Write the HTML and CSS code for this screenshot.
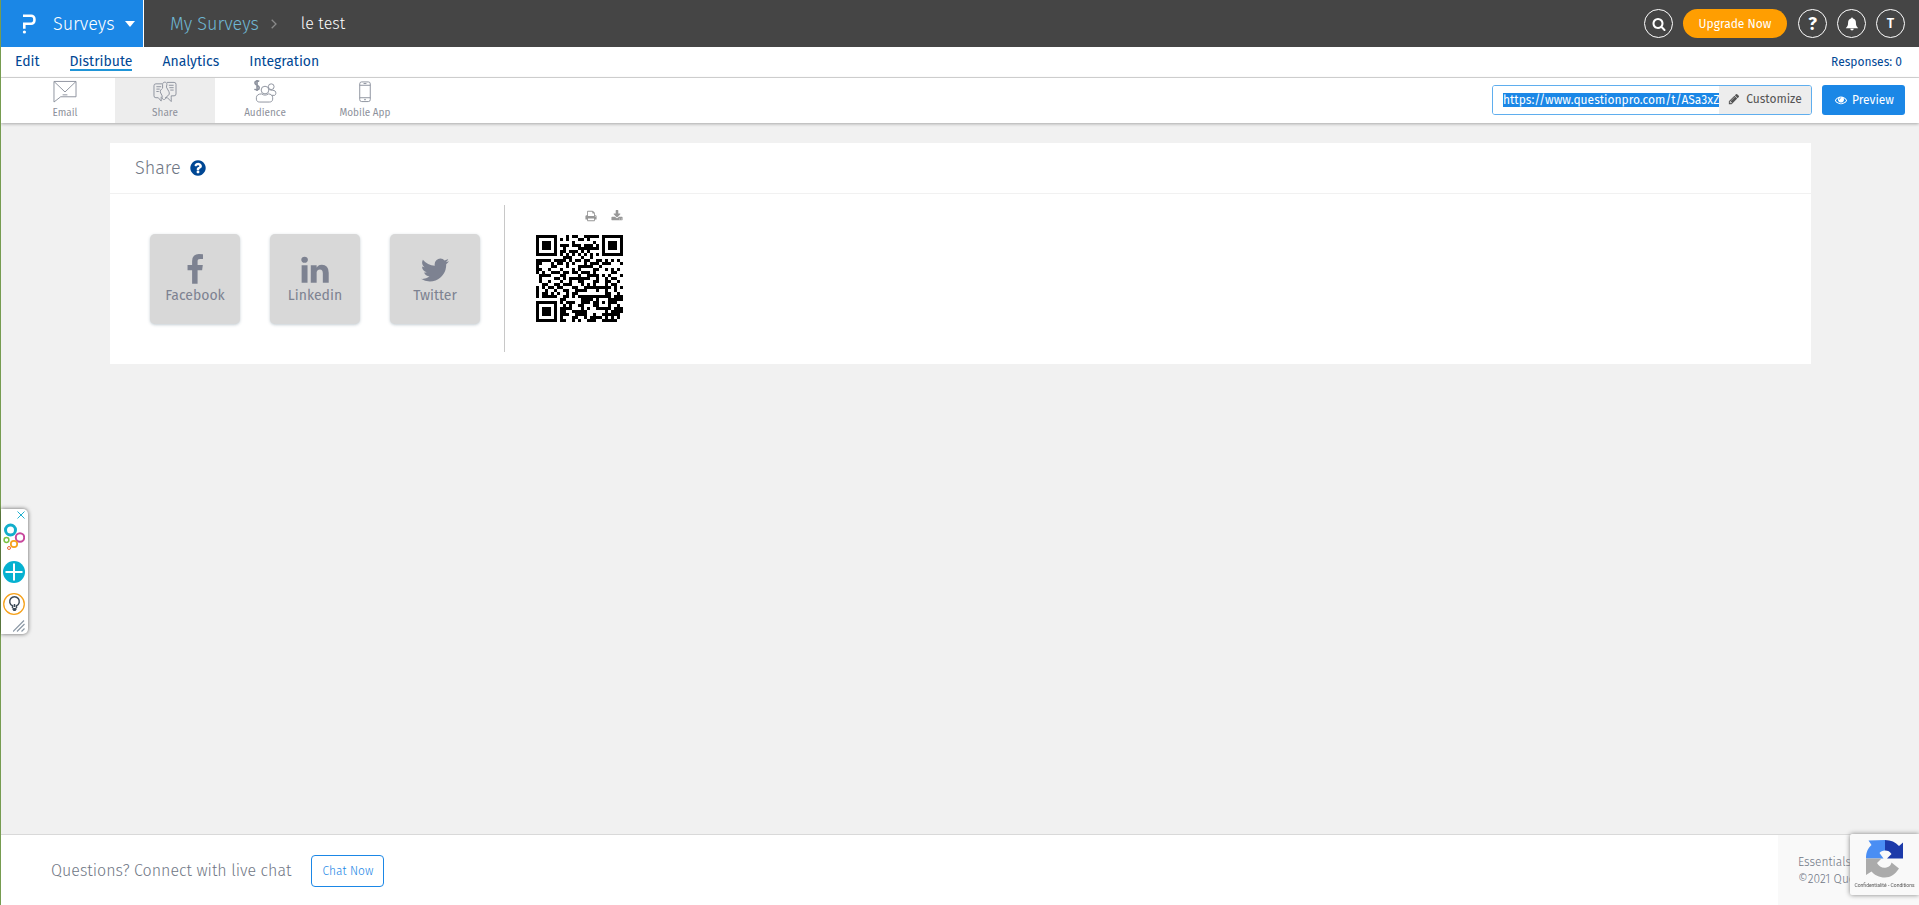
FILE: index.html
```html
<!DOCTYPE html>
<html lang="en">
<head>
  <meta charset="UTF-8">
  <meta name="viewport" content="width=device-width, initial-scale=1">
  <title>Share - le test</title>
  <link rel="stylesheet" href="styles.css">
</head>
<body>
  <!-- Top bar -->
  <header class="topbar">
    <button class="brand" type="button">
      <svg class="brand-logo" viewBox="0 0 14 20" fill="none" stroke="#fff" stroke-width="2.6"><path d="M1 1.7h8.2a3.2 3.2 0 0 1 3.2 3.2v1.6a3.2 3.2 0 0 1-3.2 3.2H2.3v5"/><circle cx="2.4" cy="18" r="1.6" fill="#fff" stroke="none"/></svg>
      <span>Surveys</span>
      <svg class="caret" viewBox="0 0 10 6"><path d="M0 0h10L5 6z" fill="#fff"/></svg>
    </button>
    <nav class="crumbs">
      <a href="#">My Surveys</a>
      <svg class="chevron" viewBox="0 0 6 10" fill="none" stroke="#8a8a8a" stroke-width="1.3"><path d="M.7.7L5 5 .7 9.3"/></svg>
      <span>le test</span>
    </nav>
    <div class="top-actions">
      <button class="round" type="button" aria-label="Search"><svg class="icon" viewBox="0 0 1792 1792"><path d="M1216 832q0-185-131.5-316.5t-316.5-131.5-316.5 131.5-131.5 316.5 131.5 316.5 316.5 131.5 316.5-131.5 131.5-316.5zm512 832q0 52-38 90t-90 38q-54 0-90-38l-343-342q-179 124-399 124-143 0-273.5-55.5t-225-150-150-225-55.5-273.5 55.5-273.5 150-225 225-150 273.5-55.5 273.5 55.5 225 150 150 225 55.5 273.5q0 220-124 399l343 343q37 37 37 90z"/></svg></button>
      <button class="upgrade" type="button">Upgrade Now</button>
      <button class="round help" type="button">?</button>
      <button class="round" type="button" aria-label="Notifications"><svg class="icon" viewBox="0 0 14 14"><path d="M7 .6c.6 0 .9.4.9.9 2 .4 3 2 3 4 0 2.900.8 4.300 2.300 5.700H.8C2.300 9.800 3.100 8.400 3.100 5.500c0-2 1-3.600 3-4 0-.5.3-.9.9-.9zM5.300 11.800h3.400a1.700 1.700 0 0 1-3.400 0z"/></svg></button>
      <button class="round user" type="button">T</button>
    </div>
  </header>

  <!-- Main tabs -->
  <nav class="tabs">
    <a href="#">Edit</a>
    <a href="#" class="active">Distribute</a>
    <a href="#">Analytics</a>
    <a href="#">Integration</a>
    <a href="#" class="responses">Responses: 0</a>
  </nav>

  <!-- Distribute tools -->
  <div class="toolbar">
    <nav class="tools">
      <a href="#">
        <svg viewBox="0 0 24 24"><path d="M.5 1.500h23v16H7.500L.5 23zM.5 1.500L12 12.500l11.500-11M9.500 15.500h5"/></svg>
        Email
      </a>
      <a href="#" class="active">
        <svg viewBox="0 0 24 24"><path d="M8 17.500V22l-3-3.500H2.500a2 2 0 0 1-2-2V6a2 2 0 0 1 2-2H9M18.500 18.500v4l-4-4H12M14 2.500h7.500a2 2 0 0 1 2 2v10a2 2 0 0 1-2 2h-3v2M9.500 4.500c0-3 4.500-3 4.500 0l-.5 3 2.500 4.500c1 2 .5 4-1.500 4.500l-2 3c-1 1.500-3.500 1-3.500-1v-2l-2-4c-.5-1.500 1.500-3 2.500-4zM3 7h5M3 9.500h3.500M3 12h2.500M16 5.500h5M16.500 8h4.500M17.500 10.500H21"/></svg>
        Share
      </a>
      <a href="#">
        <svg viewBox="0 0 24 24"><path d="M6 1.500C4.500.5 1.500.8 1.500 3.200S6 5.300 6 8 2.500 10.500 1 9.500M3.700 0v11.500" stroke-width="1.700"/><circle cx="12" cy="10.500" r="4"/><circle cx="18.500" cy="7" r="3"/><path d="M8.500 14.500C5 14.500 3 16 3 18.500v1.500c0 2 1.500 3 3.500 3h10c2 0 3.500-1 3.500-3v-1.500c0-2.500-2-4-4.500-4-2 1.700-5 1.700-7 0zM16.500 10c2 1 5 .5 6 1.500 1.300 1.300 1 4-.5 4.500h-3"/></svg>
        Audience
      </a>
      <a href="#">
        <svg viewBox="0 0 24 24"><rect x="6.500" y="2" width="11" height="20.500" rx="2"/><path d="M6.500 5.500h11M6.500 18.500h11M10.500 3.700h3"/><circle cx="12" cy="20.500" r=".5"/></svg>
        Mobile App
      </a>
    </nav>
    <div class="link-box">
      <input type="text" id="survey-url" aria-label="Survey link" value="https://www.questionpro.com/t/ASa3xZlre7" readonly>
      <button type="button"><svg class="icon" viewBox="0 0 1792 1792"><path d="M491 1536l91-91-235-235-91 91v107h128v128h107zm523-928q0-22-22-22-10 0-17 7l-542 542q-7 7-7 17 0 22 22 22 10 0 17-7l542-542q7-7 7-17zm-54-192l416 416-832 832h-416v-416zm683 96q0 53-37 90l-166 166-416-416 166-165q36-38 90-38 53 0 91 38l235 234q37 39 37 91z"/></svg>Customize</button>
    </div>
    <button class="preview" type="button"><svg class="icon" viewBox="0 0 1792 1792"><path d="M1664 960q-152-236-381-353 61 104 61 225 0 185-131.500 316.500t-316.500 131.500-316.500-131.500-131.500-316.500q0-121 61-225-229 117-381 353 133 205 333.500 326.500t434.500 121.500 434.500-121.500 333.500-326.500zm-720-384q0-20-14-34t-34-14q-125 0-214.500 89.500t-89.500 214.500q0 20 14 34t34 14 34-14 14-34q0-86 61-147t147-61q20 0 34-14t14-34zm848 384q0 34-20 69-140 230-376.500 368.500t-499.500 138.500-499.500-139-376.500-368q-20-35-20-69t20-69q140-229 376.500-368t499.500-139 499.500 139 376.500 368q20 35 20 69z"/></svg>Preview</button>
  </div>

  <main class="content">
    <section class="card">
      <div class="card-head">
        <h1>Share</h1>
        <a href="#" aria-label="Help"><svg viewBox="0 0 1792 1792"><path d="M1024 1376v-192q0-14-9-23t-23-9h-192q-14 0-23 9t-9 23v192q0 14 9 23t23 9h192q14 0 23-9t9-23zm256-672q0-88-55.500-163t-138.500-116-170-41q-243 0-371 213-15 24 8 42l132 100q7 6 19 6 16 0 25-12 53-68 86-92 34-24 86-24 48 0 85.500 26t37.500 59q0 38-20 61t-68 45q-63 28-115.500 86.500t-52.500 125.500v36q0 14 9 23t23 9h192q14 0 23-9t9-23q0-19 21.500-49.500t54.500-49.500q32-18 49-28.500t46-35 44.500-48 28-60.500 12.500-81zm384 192q0 209-103 385.500t-279.500 279.500-385.500 103-385.500-103-279.500-279.500-103-385.500 103-385.500 279.500-279.500 385.500-103 385.500 103 279.500 279.500 103 385.500z"/></svg></a>
      </div>
      <div class="card-body">
        <div class="socials">
          <button type="button"><svg viewBox="0 0 1792 1792"><path d="M1343 12v264h-157q-86 0-116 36t-30 108v189h293l-39 296h-254v759h-306v-759h-255v-296h255v-218q0-186 104-288.500t277-102.500q147 0 228 12z"/></svg>Facebook</button>
          <button type="button"><svg viewBox="0 0 1792 1792"><path d="M477 625v991h-330v-991h330zm21-306q1 73-50.500 122t-135.500 49h-2q-82 0-132-49t-50-122q0-74 51.500-122.500t134.500-48.500 133 48.500 51 122.500zm1166 729v568h-329v-530q0-105-40.500-164.500t-126.500-59.500q-63 0-105.500 34.500t-63.500 85.500q-11 30-11 81v553h-329q2-399 2-647t-1-296l-1-48h329v144h-2q20-32 41-56t56.500-52 87-43.500 114.500-15.500q171 0 275 113.500t104 332.500z"/></svg>Linkedin</button>
          <button type="button"><svg viewBox="0 0 1792 1792"><path d="M1684 408q-67 98-162 167 1 14 1 42 0 130-38 259.500t-115.500 248.500-184.500 210.500-258 146-323 54.500q-271 0-496-145 35 4 78 4 225 0 401-138-105-2-188-64.500t-114-159.500q33 5 61 5 43 0 85-11-112-23-185.500-111.500t-73.500-205.500v-4q68 38 146 41-66-44-105-115t-39-154q0-88 44-163 121 149 294.500 238.500t371.500 99.500q-8-38-8-74 0-134 94.500-228.500t228.500-94.500q140 0 236 102 109-21 205-78-37 115-142 178 93-10 186-50z"/></svg>Twitter</button>
        </div>
        <div class="qr">
          <div class="qr-actions">
            <button type="button" aria-label="Print"><svg class="icon" viewBox="0 0 1792 1792"><path d="M448 1536h896v-256h-896v256zm0-640h896v-384h-160q-40 0-68-28t-28-68v-160h-640v640zm1152 64q0-26-19-45t-45-19-45 19-19 45 19 45 45 19 45-19 19-45zm128 0v416q0 13-9.500 22.500t-22.500 9.500h-224v160q0 40-28 68t-68 28h-960q-40 0-68-28t-28-68v-160h-224q-13 0-22.500-9.500t-9.500-22.500v-416q0-79 56.500-135.500t135.500-56.500h64v-544q0-40 28-68t68-28h672q40 0 88 20t76 48l152 152q28 28 48 76t20 88v256h64q79 0 135.500 56.500t56.500 135.500z"/></svg></button>
            <button type="button" aria-label="Download"><svg class="icon" viewBox="0 0 1792 1792"><path d="M1344 1344q0-26-19-45t-45-19-45 19-19 45 19 45 45 19 45-19 19-45zm256 0q0-26-19-45t-45-19-45 19-19 45 19 45 45 19 45-19 19-45zm128-224v320q0 40-28 68t-68 28h-1472q-40 0-68-28t-28-68v-320q0-40 28-68t68-28h465l135 136q58 56 136 56t136-56l136-136h464q40 0 68 28t28 68zm-325-569q17 41-14 70l-448 448q-18 19-45 19t-45-19l-448-448q-31-29-14-70 17-39 59-39h256v-448q0-26 19-45t45-19h256q26 0 45 19t19 45v448h256q42 0 59 39z"/></svg></button>
          </div>
          <svg class="qr-code" viewBox="0 0 29 29" role="img" aria-label="QR code" shape-rendering="crispEdges"><path id="qr-path" d=""/></svg>
        </div>
      </div>
    </section>
  </main>

  <footer class="footer">
    <p>Questions? Connect with live chat</p>
    <button class="chat" type="button">Chat Now</button>
    <div class="legal">
      <span>Essentials</span>
      <span>©2021 QuestionPro</span>
    </div>
  </footer>

  <!-- Floating side widget -->
  <aside class="widget">
    <button type="button" aria-label="Close"><svg width="8" height="8" viewBox="0 0 8 8" stroke="#1fb0cf" stroke-width="1"><path d="M.5.5l7 7M7.500.5l-7 7"/></svg></button>
    <svg width="22" height="28" viewBox="0 0 22 28" fill="none"><circle cx="7.500" cy="7" r="5" stroke="#12aecb" stroke-width="3"/><circle cx="17" cy="14.500" r="4.200" stroke="#c8479c" stroke-width="2"/><circle cx="3.500" cy="17" r="2.400" stroke="#7cc242" stroke-width="1.500"/><circle cx="11" cy="21" r="3.200" stroke="#f6a21b" stroke-width="1.700"/><circle cx="6" cy="25" r="1.500" stroke="#ee6a3c" stroke-width="1"/></svg>
    <button type="button" aria-label="Add"><svg width="22" height="22" viewBox="0 0 22 22"><circle cx="11" cy="11" r="11" fill="#05b1d0"/><path d="M11 2.500v17M2.500 11h17" stroke="#fff" stroke-width="2"/></svg></button>
    <button type="button" aria-label="Ideas"><svg width="22" height="22" viewBox="0 0 22 22" fill="none"><circle cx="11" cy="11" r="10.300" stroke="#f6a21b" stroke-width="1.300"/><path d="M9.500 15v-2.200a4.800 4.800 0 1 1 4 0V15M11.500 11v3" stroke="#3e4c59" stroke-width="1.500"/><path d="M9.500 15h4v1.500l-1 1.500h-2l-1-1.500z" fill="#3e4c59"/></svg></button>
    <svg class="grip" width="12" height="12" viewBox="0 0 12 12" stroke="#8b98a5" stroke-width="1.200"><path d="M0 11.500L11 .5M4 11.500L11.500 4M8.500 11.500l3-3"/></svg>
  </aside>

  <!-- reCAPTCHA badge -->
  <div class="captcha">
    <svg viewBox="0 0 38 38"><path d="M19 0v10.500c-2.500 0-4.500 1-5.500 2.500l4 5.500H0C0 12 2 8 5.500 5L2.500.5z" fill="#4a8ef4"/><path d="M19 0c6 0 10.500 2 14 6l4-3.500v16H21l4.500-4.500C24 11.500 22 10.500 19 10.500z" fill="#1c3aa9"/><path d="M0 18.500h15.500L11 23c2 4 6 5.500 9.500 4.500 3-.5 4.500-2.500 5-5l7.500 6c-4 6-8.500 9-14 9-6 0-10.500-2.500-13.500-6L0 35z" fill="#ababab"/></svg>
    <span><a href="#">Confidentialité</a> - <a href="#">Conditions</a></span>
  </div>

  <script src="script.js"></script>
</body>
</html>
```

FILE: styles.css
```css
* {
  box-sizing: border-box;
}
body {
  margin: 0;
  min-height: 100vh;
  display: flex;
  flex-direction: column;
  border-left: 1px solid #769c50;
  background: #f1f1f1;
  color: #707785;
  font-family: "Fira Sans", Roboto, "Liberation Sans", sans-serif;
  font-size: 14px;
}
a {
  color: inherit;
  text-decoration: none;
}
button {
  margin: 0;
  padding: 0;
  border: 0;
  background: none;
  color: inherit;
  font: inherit;
  cursor: pointer;
}
svg {
  display: block;
}
.icon {
  width: 14px;
  height: 14px;
  fill: currentColor;
}

/* top bar */
.topbar {
  display: flex;
  height: 47px;
  background: #454545;
  color: #fff;
  font-size: 18px;
  font-weight: 300;
}
.brand {
  display: flex;
  align-items: center;
  width: 143px;
  padding-left: 21px;
  border-right: 1px solid #fff;
  background: #1b87e6;
}
.brand-logo {
  width: 14px;
  height: 20px;
  margin-right: 17px;
}
.caret {
  width: 10px;
  height: 6px;
  margin-left: 10px;
}
.crumbs {
  display: flex;
  align-items: center;
  padding-left: 26px;
}
.crumbs a {
  color: #6fb6d2;
}
.crumbs span {
  font-size: 16px;
}
.chevron {
  width: 6px;
  height: 10px;
  margin: 0 24px 0 12px;
}
.top-actions {
  display: flex;
  align-items: center;
  gap: 10px;
  margin-left: auto;
  padding-right: 14px;
}
.round {
  display: flex;
  align-items: center;
  justify-content: center;
  width: 29px;
  height: 29px;
  border: 1px solid #fff;
  border-radius: 50%;
}
.help {
  font-size: 18px;
  font-weight: 700;
}
.user {
  font-size: 14px;
  font-weight: 500;
}
.upgrade {
  width: 104px;
  height: 29px;
  margin-right: 1px;
  border-radius: 15px;
  background: #ff9e01;
  font-size: 12px;
  font-weight: 400;
}

/* tabs */
.tabs {
  display: flex;
  align-items: center;
  gap: 30px;
  height: 31px;
  padding: 0 17px 0 14px;
  border-bottom: 1px solid #d9d9d9;
  background: #fff;
  color: #004794;
  line-height: 18px;
}
.tabs .active {
  box-shadow: inset 0 -2px 0 #1f95d8;
}
.tabs .responses {
  margin-left: auto;
  font-size: 12px;
}

/* toolbar */
.toolbar {
  display: flex;
  align-items: flex-start;
  height: 45px;
  padding: 0 14px;
  background: #fff;
  box-shadow: 0 1px 3px rgba(0, 0, 0, 0.3);
}
.tools {
  display: flex;
  margin-right: auto;
}
.tools a {
  display: flex;
  flex-direction: column;
  align-items: center;
  width: 100px;
  height: 45px;
  padding-top: 2px;
  color: #8d919b;
  font-size: 10px;
  line-height: 20px;
}
.tools .active {
  background: #ededed;
}
.tools svg {
  width: 24px;
  height: 24px;
  fill: none;
  stroke: #8d929e;
  stroke-width: 1;
}
.link-box {
  display: flex;
  width: 320px;
  height: 30px;
  margin: 7px 10px 0 0;
  border: 1px solid #5faeee;
  border-radius: 3px;
  overflow: hidden;
}
.link-box input {
  flex: 1;
  min-width: 0;
  padding: 0 0 0 10px;
  border: 0;
  outline: 0;
  color: #545e6b;
  font: inherit;
  font-size: 12px;
}
.link-box input::selection {
  background: #1b87e6;
  color: #fff;
}
.link-box button {
  display: flex;
  align-items: center;
  justify-content: center;
  gap: 6px;
  width: 92px;
  padding-bottom: 2px;
  background: #ededed;
  color: #545454;
  font-size: 12px;
}
.link-box .icon,
.preview .icon {
  width: 12px;
  height: 12px;
}
.preview {
  display: flex;
  align-items: center;
  justify-content: center;
  gap: 5px;
  width: 83px;
  height: 30px;
  margin-top: 7px;
  padding-left: 2px;
  border-radius: 3px;
  background: #1b87e6;
  color: #fff;
  font-size: 12px;
}

/* share card */
.content {
  flex: 1;
  padding: 20px 108px 20px 109px;
}
.card {
  background: #fff;
}
.card-head {
  display: flex;
  align-items: center;
  gap: 8px;
  height: 51px;
  padding: 0 0 1px 25px;
  border-bottom: 1px solid #f1f1f1;
}
.card-head h1 {
  margin: 0;
  font-size: 18px;
  font-weight: 300;
}
.card-head svg {
  width: 18px;
  height: 18px;
  fill: #004794;
}
.card-body {
  display: flex;
  padding: 11px 0 12px 40px;
}
.socials {
  display: flex;
  gap: 30px;
  padding: 29px 24px 28px 0;
  border-right: 1px solid #c8c8c8;
}
.socials button {
  display: flex;
  flex-direction: column;
  align-items: center;
  width: 90px;
  height: 90px;
  padding-top: 20px;
  border-radius: 5px;
  background: #d8d8d8;
  box-shadow: 0 1px 3px rgba(60, 90, 110, 0.3);
  color: #7d8291;
  line-height: 20px;
}
.socials svg {
  width: 32px;
  height: 32px;
  fill: #7d8291;
}
.qr {
  padding: 5px 0 0 31px;
}
.qr-actions {
  display: flex;
  justify-content: flex-end;
  gap: 14px;
  margin-bottom: 13px;
  color: #979797;
}
.qr-actions .icon {
  width: 12px;
  height: 12px;
}
.qr-code {
  width: 87px;
  height: 87px;
}

/* footer */
.footer {
  display: flex;
  align-items: center;
  height: 71px;
  padding-left: 50px;
  border-top: 1px solid #d9d9d9;
  background: #fff;
}
.footer p {
  margin: 0 20px 0 0;
  font-size: 16px;
  font-weight: 300;
}
.chat {
  width: 73px;
  height: 32px;
  margin-top: 2px;
  border: 1px solid #1b87e6;
  border-radius: 4px;
  color: #1b87e6;
  font-size: 12px;
  font-weight: 300;
}
.legal {
  align-self: stretch;
  width: 141px;
  margin-left: auto;
  padding: 19px 69px 0 20px;
  background: #f9f9f9;
  font-size: 12px;
  line-height: 17px;
  font-weight: 300;
}
.legal span {
  display: block;
  overflow: hidden;
  white-space: nowrap;
}

/* floating parts */
.widget {
  position: fixed;
  left: 1px;
  top: 509px;
  display: flex;
  flex-direction: column;
  align-items: center;
  gap: 10px;
  width: 27px;
  padding: 2px 3px 2px 2px;
  border-radius: 0 5px 5px 0;
  background: #fff;
  box-shadow: 0 0 4px rgba(0, 0, 0, 0.6);
}
.widget button:first-child {
  align-self: flex-end;
  margin-bottom: -6px;
}
.widget .grip {
  align-self: flex-end;
  margin-top: -5px;
}
.captcha {
  position: fixed;
  right: 0;
  bottom: 10px;
  display: flex;
  flex-direction: column;
  align-items: center;
  gap: 3px;
  width: 69px;
  height: 61px;
  padding-top: 6px;
  border-radius: 2px 0 0 2px;
  background: #f9f9f9;
  box-shadow: 0 0 5px gray;
  color: #555;
  font-family: Roboto, "Liberation Sans", sans-serif;
  font-size: 5px;
  line-height: 8px;
  white-space: nowrap;
}
.captcha svg {
  width: 38px;
  height: 38px;
}
```

FILE: script.js
```js
// QR code, version 3 (29x29), level L, byte mode
var SIZE = 29, DATA = 55, ECC = 15;

function gfMul(a, b) {
  var r = 0;
  for (; b; b >>= 1) {
    if (b & 1) r ^= a;
    a <<= 1;
    if (a & 256) a ^= 0x11d;
  }
  return r;
}

function codewords(text) {
  var bits = '0100' + text.length.toString(2).padStart(8, '0');
  for (var i = 0; i < text.length; i++) bits += text.charCodeAt(i).toString(2).padStart(8, '0');
  bits += '0000';
  var out = bits.match(/.{8}/g).map(function(b) { return parseInt(b, 2); });
  for (var pad = 236; out.length < DATA; pad ^= 236 ^ 17) out.push(pad);

  // generator polynomial, then the remainder
  var gen = [1], root = 1;
  for (i = 0; i < ECC; i++) {
    var next = gen.concat(0);
    gen.forEach(function(g, k) { next[k + 1] ^= gfMul(g, root); });
    gen = next;
    root = gfMul(root, 2);
  }
  var rem = out.concat(new Array(ECC).fill(0));
  for (i = 0; i < DATA; i++) {
    var f = rem[i];
    gen.forEach(function(g, k) { rem[i + k] ^= gfMul(g, f); });
  }
  return out.concat(rem.slice(DATA));
}

var masks = [
  function(r, c) { return (r + c) % 2; },
  function(r) { return r % 2; },
  function(r, c) { return c % 3; },
  function(r, c) { return (r + c) % 3; },
  function(r, c) { return (Math.floor(r / 2) + Math.floor(c / 3)) % 2; },
  function(r, c) { return r * c % 2 + r * c % 3; },
  function(r, c) { return (r * c % 2 + r * c % 3) % 2; },
  function(r, c) { return ((r + c) % 2 + r * c % 3) % 2; }
];

function build(words, mask) {
  var m = [], r, c, i;
  for (r = 0; r < SIZE; r++) m.push(new Array(SIZE).fill(null));

  [[3, 3], [3, 25], [25, 3]].forEach(function(p) {
    for (var y = -4; y <= 4; y++) for (var x = -4; x <= 4; x++) {
      if (!m[p[0] + y] || m[p[0] + y][p[1] + x] === undefined) continue;
      var d = Math.max(Math.abs(x), Math.abs(y));
      m[p[0] + y][p[1] + x] = d !== 2 && d !== 4;
    }
  });
  for (r = -2; r <= 2; r++) for (c = -2; c <= 2; c++) {
    m[22 + r][22 + c] = Math.max(Math.abs(r), Math.abs(c)) !== 1;
  }
  for (i = 8; i < SIZE - 8; i++) m[6][i] = m[i][6] = i % 2 === 0;

  // format information
  var fmt = 8 | mask, rem = fmt;
  for (i = 0; i < 10; i++) rem = (rem << 1) ^ ((rem >> 9) * 0x537);
  var f = (fmt << 10 | rem) ^ 0x5412;
  function bit(k) { return (f >> k & 1) === 1; }
  for (i = 0; i < 6; i++) m[i][8] = bit(i);
  m[7][8] = bit(6);
  m[8][8] = bit(7);
  m[8][7] = bit(8);
  for (i = 9; i < 15; i++) m[8][14 - i] = bit(i);
  for (i = 0; i < 8; i++) m[8][SIZE - 1 - i] = bit(i);
  for (i = 8; i < 15; i++) m[SIZE - 15 + i][8] = bit(i);
  m[SIZE - 8][8] = true;

  // data, zigzag from the bottom right
  var n = 0, up = true;
  for (var right = SIZE - 1; right > 0; right -= 2) {
    if (right === 6) right = 5;
    for (i = 0; i < SIZE; i++) {
      r = up ? SIZE - 1 - i : i;
      for (c = right; c > right - 2; c--) {
        if (m[r][c] !== null) continue;
        var on = n < words.length * 8 && (words[n >> 3] >> (7 - (n & 7)) & 1) === 1;
        m[r][c] = on !== (masks[mask](r, c) === 0);
        n++;
      }
    }
    up = !up;
  }
  return m;
}

function penalty(m) {
  var score = 0, dark = 0, r, c;
  var lines = m.map(function(row) { return row.map(Number).join(''); });
  for (c = 0; c < SIZE; c++) lines.push(m.map(function(row) { return Number(row[c]); }).join(''));
  lines.forEach(function(l) {
    (l.match(/0{5,}|1{5,}/g) || []).forEach(function(run) { score += run.length - 2; });
    for (var i = 0; i <= SIZE - 11; i++) {
      var s = l.substr(i, 11);
      if (s === '10111010000' || s === '00001011101') score += 40;
    }
  });
  for (r = 0; r < SIZE; r++) for (c = 0; c < SIZE; c++) {
    if (m[r][c]) dark++;
    if (r && c && m[r][c] === m[r - 1][c] && m[r][c] === m[r][c - 1] && m[r][c] === m[r - 1][c - 1]) score += 3;
  }
  return score + Math.floor(Math.abs(dark * 20 / (SIZE * SIZE) - 10)) * 10;
}

var url = document.getElementById('survey-url');
var words = codewords(url.value);
var best = null, bestScore = Infinity;
for (var k = 0; k < 8; k++) {
  var grid = build(words, k), s = penalty(grid);
  if (s < bestScore) {
    bestScore = s;
    best = grid;
  }
}
var d = '';
best.forEach(function(row, y) {
  row.forEach(function(on, x) {
    if (on) d += 'M' + x + ' ' + y + 'h1v1h-1z';
  });
});
document.getElementById('qr-path').setAttribute('d', d);

// link is selected, ready to copy
url.focus();
url.select();
```
